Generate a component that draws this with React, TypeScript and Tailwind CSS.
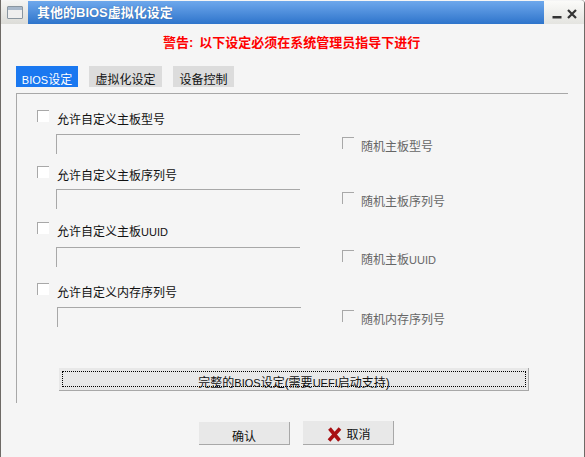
import React from "react";

const rows = [
  { label: "允许自定义主板型号", random: "随机主板型号", top: "mt-[16px]", inputGap: "mt-[8px]", left: "ml-[39px]" },
  { label: "允许自定义主板序列号", random: "随机主板序列号", top: "mt-[12px]", inputGap: "mt-[7px]", left: "ml-[39px]" },
  { label: "允许自定义主板", latin: "UUID", random: "随机主板", top: "mt-[13px]", inputGap: "mt-[9px]", left: "ml-[39px]" },
  { label: "允许自定义内存序列号", random: "随机内存序列号", top: "mt-[16px]", inputGap: "mt-[8px]", left: "ml-[40px]" },
];

function Check({ disabled }: { disabled?: boolean }) {
  return (
    <span
      className={`block w-[12px] h-[12px] shrink-0 border-t border-l border-[#a8a8a8] ${disabled ? "" : "bg-white"}`}
    />
  );
}

function OptionRow({ row }: { row: (typeof rows)[number] }) {
  return (
    <div className={row.top}>
      <div className="flex items-start h-[16px] ml-[20px]">
        <Check />
        <span className="ml-[8px] pt-[2px] text-[#111]">
          {row.label}
          {row.latin && <span className="text-[11px]">{row.latin}</span>}
        </span>
      </div>
      <div className={`flex ${row.inputGap}`}>
        <div className={`${row.left} w-[244px] h-[20px] border-t border-l border-[#a8a8a8]`} />
        <div className={`flex items-start h-[16px] mt-[3px] ${row.left === "ml-[40px]" ? "ml-[41px]" : "ml-[42px]"}`}>
          <Check disabled />
          <span className="ml-[7px] pt-[2px] text-[#666]">
            {row.random}
            {row.latin && <span className="text-[11px]">{row.latin}</span>}
          </span>
        </div>
      </div>
    </div>
  );
}

export default function App() {
  return (
    <div
      className="w-[585px] h-[457px] flex flex-col bg-[#f5f5f5] border-l border-r border-[#6e6a66] rounded-tr-[4px] overflow-hidden text-[12px] leading-[16px]"
      style={{ fontFamily: '"Liberation Sans", "Noto Sans CJK SC", sans-serif' }}
    >
      {/* title bar */}
      <div className="flex h-[23px] shrink-0 mt-px">
        <div className="w-[27px] flex items-center justify-center bg-gradient-to-b from-[#f4f4f2] to-[#dcdcd8]">
          <span className="block w-[16px] h-[13px] border border-[#8a96a0] rounded-[1px] bg-gradient-to-b from-[#a9b9cb] from-[25%] to-[#efefef] to-[25%]" />
        </div>
        <div className="w-[516px] flex items-center pl-[9px] bg-gradient-to-b from-[#6ea8ec] to-[#2d74cb] text-white font-bold text-[13px] [text-shadow:0_0_1px_#1c4f90]">
          其他的BIOS虚拟化设定
        </div>
        <div className="flex-1 flex items-center justify-end gap-[5px] pr-[7px] pt-[3px] bg-gradient-to-b from-[#fbfbf9] to-[#e4e4e0]">
          <svg width="10" height="10" viewBox="0 0 10 10">
            <rect x="0.5" y="7" width="9" height="2.5" fill="#333" />
          </svg>
          <svg width="10" height="10" viewBox="0 0 10 10">
            <path d="M1 1 L9 9 M9 1 L1 9" stroke="#333" strokeWidth="2.2" />
          </svg>
        </div>
      </div>

      <div className="mt-[11px] ml-[162px] font-bold text-[13px] text-[#ff0000] whitespace-nowrap">
        警告:<span className="ml-[6px]">以下设定必须在系统管理员指导下进行</span>
      </div>

      {/* tabs */}
      <div className="flex mt-[15px] ml-[15px] h-[21px]">
        <div className="w-[62px] flex items-center justify-center pt-[7px] bg-[#1a78f0] text-white">
          <span className="text-[11px]">BIOS</span>设定
        </div>
        <div className="w-[73px] ml-[11px] flex items-center justify-center pt-[7px] bg-[#dcdcdc] text-[#111]">虚拟化设定</div>
        <div className="w-[61px] ml-[11px] flex items-center justify-center pt-[7px] bg-[#dcdcdc] text-[#111]">设备控制</div>
      </div>

      {/* panel */}
      <div className="mt-[6px] ml-[15px] w-[552px] h-[310px] border-t border-l border-[#a8a8a8] flex flex-col">
        {rows.map((row) => (
          <OptionRow key={row.label} row={row} />
        ))}
        <div className="mt-[41px] ml-[42px] w-[470px] h-[23px] pt-[3px] pb-[3px] pl-[3px] pr-[2px] bg-[#e8e8e8] border-b border-r border-[#a8a8a8]">
          <div className="h-full flex items-center justify-center pt-[7px] border border-dotted border-black text-[#111]">
            完整的<span className="text-[11px]">BIOS</span>设定(需要<span className="text-[11px]">UEFI</span>启动支持)
          </div>
        </div>
      </div>

      {/* footer buttons */}
      <div className="flex mt-[18px] ml-[198px] gap-[13px] items-end">
        <div className="w-[91px] h-[23px] flex items-center justify-center pt-[7px] bg-[#e8e8e8] border-b border-r border-[#a8a8a8] text-[#111]">
          确认
        </div>
        <div className="w-[91px] h-[24px] flex items-center justify-center gap-[4px] pt-[4px] pl-[2px] bg-[#e8e8e8] border-b border-r border-[#a8a8a8] text-[#111]">
          <svg width="15" height="15" viewBox="0 0 15 15">
            <path d="M2.5 1.5 L12.5 13.5 M13 1.5 L2 13.5" stroke="#a80f12" strokeWidth="3.6" />
          </svg>
          取消
        </div>
      </div>
    </div>
  );
}
